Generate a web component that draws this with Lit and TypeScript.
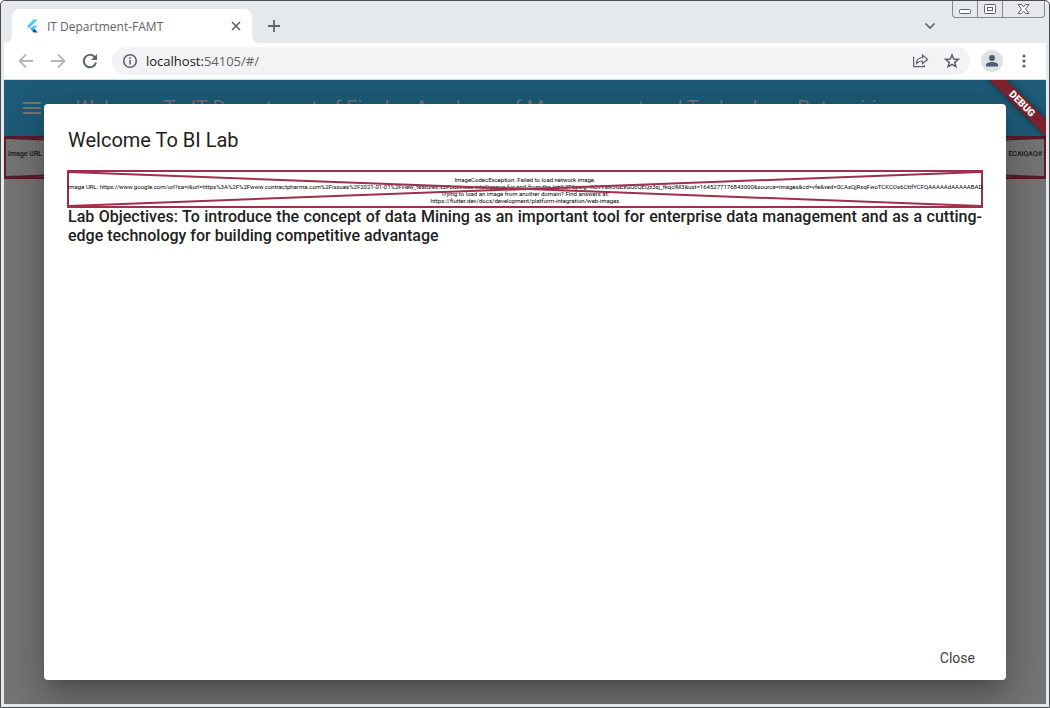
import { LitElement, html, css } from "lit";
import { customElement } from "lit/decorators.js";

const IMAGE_URL =
  "https://www.google.com/url?sa=i&url=https%3A%2F%2Fwww.contractpharma.com%2Fissues%2F2021-01-01%2Fview_features%2Fbusiness-intelligence-for-and-from-the-lab%2F&psig=AOvVaw3GExGOcQEQz3sj_fkqclM3&ust=1645277176843000&source=images&cd=vfe&ved=0CAsQjRxqFwoTCKCOs6CttfYCFQAAAAAdAAAAABAD";

@customElement("broken-image")
class BrokenImage extends LitElement {
  static styles = css`
    :host { display: block; position: relative; box-sizing: border-box; border: 2px solid #9f2f4b; color: #151515; }
    svg { position: absolute; inset: 0; width: 100%; height: 100%; }
    line { stroke: #9f2f4b; stroke-width: 2; }
    :host([dimmed]) line { stroke: #5c1a2c; }
  `;
  render() {
    return html`<slot></slot>
      <svg aria-hidden="true">
        <line x1="0" y1="0" x2="100%" y2="100%" /><line x1="100%" y1="0" x2="0" y2="100%" />
      </svg>`;
  }
}

@customElement("browser-chrome")
class BrowserChrome extends LitElement {
  static styles = css`
    :host { display: block; background: #e6e9ec; font-family: "Open Sans", "Noto Sans", sans-serif; color: #5f6368; }
    button { border: 0; padding: 0; margin: 0; background: none; color: inherit; display: flex; align-items: center; justify-content: center; }
    svg { display: block; fill: none; stroke: currentColor; }
    .tabs { display: flex; height: 42px; padding-left: 8px; position: relative; }
    .tab { position: relative; display: flex; align-items: center; box-sizing: border-box; width: 240px; height: 34px; margin-top: 8px; padding: 0 8px 0 12px; background: #fff; border-radius: 8px 8px 0 0; font-size: 12px; }
    .tab::before, .tab::after { content: ""; position: absolute; bottom: 0; width: 8px; height: 8px; }
    .tab::before { left: -8px; background: radial-gradient(circle at 0 0, transparent 8px, #fff 8px); }
    .tab::after { right: -8px; background: radial-gradient(circle at 100% 0, transparent 8px, #fff 8px); }
    .name { flex: 1; margin-left: 7px; white-space: nowrap; }
    .close { width: 16px; height: 16px; }
    .add { width: 28px; height: 28px; margin: 11px 0 0 8px; }
    .search { width: 20px; height: 20px; margin: 15px 106px 0 auto; }
    .controls { position: absolute; top: -2px; right: 1px; display: flex; height: 18px; border: 1px solid #85888d; border-top: 0; border-radius: 0 0 4px 4px; }
    .controls button { width: 25px; padding-top: 2px; border-right: 1px solid #85888d; }
    .controls button:last-child { width: 41px; border: 0; }
    .bar { display: flex; align-items: center; height: 36px; background: #fff; border-bottom: 1px solid #d9dcdf; padding: 0 12px; }
    .nav { width: 20px; height: 20px; margin-right: 12px; }
    .nav.off { color: #b5b7b9; }
    .omni { flex: 1; display: flex; align-items: center; height: 28px; border-radius: 14px; background: #f1f3f4; padding: 0 10px; margin-right: 11px; }
    .url { flex: 1; margin-left: 8px; font-size: 13px; line-height: 20px; }
    .url b { font-weight: 400; color: #202124; }
    .share { margin-right: 14px; }
    .avatar { width: 22px; height: 22px; border-radius: 11px; background: #dee1e6; color: #505c72; margin-right: 11px; }
    .more { width: 20px; height: 20px; }
  `;
  render() {
    return html`
      <div class="tabs">
        <div class="tab">
          <svg width="16" height="16" viewBox="0 0 16 16">
            <path fill="#54c5f8" stroke="none" d="M9.5 1.5h4.2L5 10.2 3 8zM9.5 7.5h4.2l-3.3 3.3-2.1-2.1-1 1-1.3 1.3z" />
            <path fill="#29b6f6" stroke="none" d="M6.2 10.8l2-2 2.2 2-2.2 2.1z" />
            <path fill="#01579b" stroke="none" d="M8.2 12.9l2.2-2.1 3.3 3.7H9.6z" />
          </svg>
          <span class="name">IT Department-FAMT</span>
          <button class="close" aria-label="Close tab"><svg width="16" height="16" stroke-width="1.6"><path d="M4 4l8 8m0-8l-8 8" /></svg></button>
        </div>
        <button class="add" aria-label="New tab"><svg width="14" height="14" stroke-width="1.8"><path d="M7 1v12M1 7h12" /></svg></button>
        <button class="search" aria-label="Search tabs"><svg width="12" height="12" stroke-width="1.7"><path d="M1.5 3.5L6 8l4.5-4.5" /></svg></button>
        <div class="controls">
          <button aria-label="Minimize"><svg width="13" height="14"><rect x=".5" y="7.5" width="11" height="4" rx="1" fill="#fff" /></svg></button>
          <button aria-label="Maximize"><svg width="13" height="14"><rect x=".5" y="2.5" width="11" height="9" rx="1" fill="#fff" /><rect x="3.5" y="5.5" width="5" height="3" /></svg></button>
          <button aria-label="Close window"><svg width="13" height="14"><path fill="#fff" d="M1 2.500h3.500L6.500 5l2-2.500H12L8.500 7l3.500 4.500H8.500L6.500 9l-2 2.500H1L4.500 7z" /></svg></button>
        </div>
      </div>
      <div class="bar">
        <button class="nav off" aria-label="Back"><svg width="16" height="16" stroke-width="1.8"><path d="M15 8H2M8 1.500L1.500 8 8 14.500" /></svg></button>
        <button class="nav off" aria-label="Forward"><svg width="16" height="16" stroke-width="1.8"><path d="M1 8h13M8 1.500L14.500 8 8 14.500" /></svg></button>
        <button class="nav" aria-label="Reload"><svg width="16" height="16" stroke-width="2"><path d="M14 9.500A6.200 6.200 0 1 1 12.300 3.600L14 5.300" /><path d="M15 1v6H9z" fill="currentColor" stroke="none" /></svg></button>
        <div class="omni">
          <svg width="16" height="16" stroke-width="1.6"><circle cx="8" cy="8" r="6.3" /><path d="M8 7v4.500M8 4.300v1.600" /></svg>
          <span class="url"><b>localhost:</b>54105/#/</span>
          <button class="share" aria-label="Share"><svg width="18" height="16" stroke-width="1.2"><path d="M1.600 4v9.700h10.800V12M4.500 10.500C4.500 6.500 7 4.700 10.500 4.700V2l5 4.500-5 4.300V8C8 8 6 8.700 4.500 10.500z" /></svg></button>
          <button aria-label="Bookmark"><svg width="16" height="16" stroke-width="1.5"><path d="M8 1.900l1.700 4.200 4.500.3-3.500 2.900 1.200 4.400L8 11.300l-3.900 2.400 1.200-4.400L1.800 6.400l4.500-.3z" /></svg></button>
        </div>
        <button class="avatar" aria-label="Profile"><svg width="14" height="14"><g fill="currentColor" stroke="none"><circle cx="7" cy="4" r="3" /><path d="M1 12.500V11c0-2 3-3 6-3s6 1 6 3v1.500z" /></g></svg></button>
        <button class="more" aria-label="Menu"><svg width="4" height="16"><g fill="currentColor" stroke="none"><circle cx="2" cy="3" r="1.6" /><circle cx="2" cy="8" r="1.6" /><circle cx="2" cy="13" r="1.6" /></g></svg></button>
      </div>`;
  }
}

@customElement("app-root")
class AppRoot extends LitElement {
  static styles = css`
    :host { display: flex; flex-direction: column; box-sizing: border-box; height: 100vh; border: 1px solid #4b4c50; border-radius: 5px 5px 0 0; background: #e6e9ec; padding: 0 3px 3px; font-family: Roboto, sans-serif; overflow: hidden; }
    .page { flex: 1; min-height: 0; position: relative; overflow: hidden; background: #757575; }
    .appbar { display: flex; align-items: center; height: 56px; background: #1e5b77; color: #757575; }
    .menu { border: 0; background: none; color: inherit; padding: 0; width: 56px; height: 56px; display: flex; align-items: center; justify-content: center; }
    .appbar h1 { margin: 0 0 0 16px; font-size: 20px; line-height: 24px; font-weight: 400; white-space: nowrap; color: #757575; }
    .behind { display: flex; justify-content: space-between; height: 43px; font-size: 7px; line-height: 7px; font-weight: 500; padding: 13px 2px; border-color: #5c1a2c; white-space: nowrap; }
    .ribbon { position: absolute; top: 0; right: 0; width: 60px; height: 60px; overflow: hidden; }
    .ribbon span { position: absolute; top: 18px; right: -36px; width: 120px; height: 12px; transform: rotate(45deg); background: #7f232d; box-shadow: 0 0 6px rgba(0,0,0,.5); color: #fff; font-size: 10px; line-height: 12px; font-weight: 900; text-align: center; }
    .overlay { position: absolute; inset: 24px 40px; display: flex; }
    .dialog { flex: 1; min-width: 0; display: flex; flex-direction: column; box-sizing: border-box; background: #fff; border-radius: 4px; padding: 24px 24px 8px; box-shadow: 0 11px 15px -7px rgba(0,0,0,.2), 0 24px 38px 3px rgba(0,0,0,.14), 0 9px 46px 8px rgba(0,0,0,.12); color: #212121; }
    h2 { margin: 0 0 18px; font-size: 20px; line-height: 24px; font-weight: 400; }
    .failed { height: 38px; margin: 0 -1px -1px; padding: 4px 0; font-size: 6px; line-height: 7px; text-align: center; color: #000; }
    .failed div { display: flex; justify-content: center; white-space: nowrap; }
    .goals { flex: 1; margin: 0; font-size: 16px; line-height: 19px; font-weight: 500; text-align: justify; }
    .actions { display: flex; justify-content: flex-end; }
    .actions button { border: 0; background: none; padding: 0 7px; height: 28px; font: 400 14px/28px Roboto, sans-serif; color: #424242; }
  `;
  render() {
    return html`
      <browser-chrome></browser-chrome>
      <div class="page">
        <header class="appbar">
          <button class="menu" aria-label="Open navigation"><svg width="18" height="12" fill="currentColor"><path d="M0 0h18v2H0zM0 5h18v2H0zM0 10h18v2H0z" /></svg></button>
          <h1>Welcome To IT Department of Finolex Academy of Management and Technology, Ratnagiri</h1>
        </header>
        <broken-image class="behind" dimmed><span>Image URL</span><span>ECAIQAQ#</span></broken-image>
        <div class="ribbon"><span>DEBUG</span></div>
        <div class="overlay">
          <section class="dialog" role="dialog" aria-labelledby="title">
            <h2 id="title">Welcome To BI Lab</h2>
            <broken-image class="failed">
              <div>ImageCodecException: Failed to load network image.</div>
              <div>Image URL: ${IMAGE_URL}</div>
              <div>Trying to load an image from another domain? Find answers at:</div>
              <div>https://flutter.dev/docs/development/platform-integration/web-images</div>
            </broken-image>
            <p class="goals">Lab Objectives: To introduce the concept of data Mining as an important tool for enterprise data management and as a cutting-edge technology for building competitive advantage</p>
            <div class="actions"><button>Close</button></div>
          </section>
        </div>
      </div>`;
  }
}
